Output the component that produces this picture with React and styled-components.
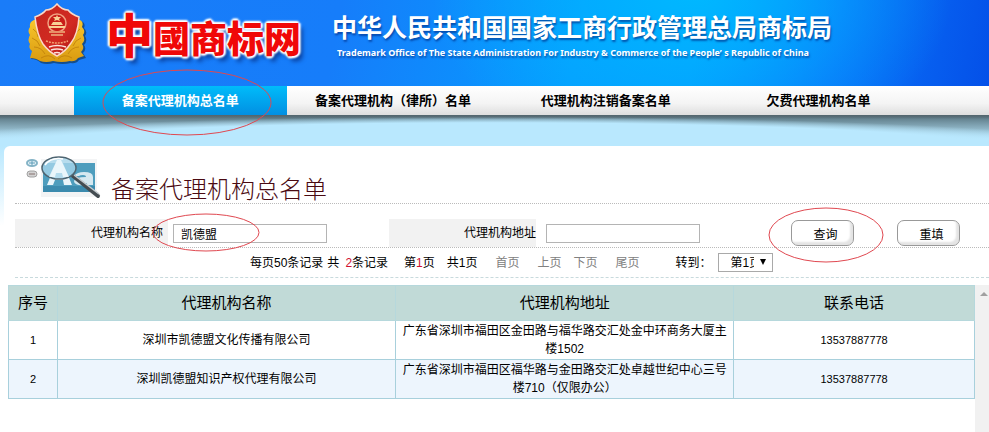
import React, { useState } from 'react';
import styled, { createGlobalStyle } from 'styled-components';

const FONT = `'Liberation Sans', 'Noto Sans CJK SC', sans-serif`;
const LINE = '#a8d0dc';

const GlobalStyle = createGlobalStyle`
  * {
    box-sizing: border-box;
  }

  body {
    margin: 0;
    font-family: ${FONT};
    font-size: 12px;
    line-height: 18px;
    color: #000;
    background: #fff;
  }

  button, input, select {
    font-family: inherit;
    font-size: 12px;
    color: inherit;
  }
`;

const Banner = styled.header`
  display: flex;
  align-items: flex-start;
  height: 86px;
  padding-left: 26px;
  background:
    radial-gradient(ellipse 260px 180px at 70% -10%, #00b8ff, rgba(0, 170, 255, 0) 100%),
    linear-gradient(100deg, #1a7cf8 0%, #167dfa 34%, #069bff 58%, #0598ff 70%, #0a74fa 84%, #0450e8 100%);
`;

const Emblem = styled.svg`
  flex: none;
  width: 62px;
  height: 62px;
  margin-top: 2px;
`;

const SiteName = styled.div`
  flex: none;
  margin: 7px 0 0 18px;
  font-size: 37px;
  line-height: 60px;
  font-weight: 900;
  color: #f00808;
  text-shadow: 2px 0 2px #fff, -2px 0 2px #fff, 0 2px 2px #fff, 0 -2px 2px #fff,
    1px 1px 2px #fff, -1px -1px 2px #fff, 4px 5px 4px #0a3f9c;
`;

const LeadChar = styled.span`
  font-size: 47px;
`;

const BannerTitles = styled.div`
  flex: none;
  margin: 12px 0 0 31px;
  color: #fff;
  white-space: nowrap;
  text-shadow: 1px 2px 2px rgba(0, 50, 140, 0.7);
`;

const OfficeName = styled.h1`
  margin: 0;
  font-size: 25px;
  line-height: 32px;
  font-weight: 700;
`;

const OfficeNameEn = styled.p`
  margin: 0;
  padding-left: 5px;
  font-family: 'Noto Sans', sans-serif;
  font-size: 9px;
  font-weight: 700;
`;

const Nav = styled.nav`
  display: grid;
  grid-template-columns: repeat(4, 1fr);
  height: 29px;
  padding: 0 64px 0 74px;
  background: linear-gradient(#fff, #f4f4f4 60%, #dedede);
`;

const NavItem = styled.a`
  position: relative;
  display: flex;
  align-items: center;
  justify-content: center;
  font-size: 13px;
  font-weight: 700;
  text-decoration: none;
  color: ${props => (props.$active ? '#fff' : '#000')};
  background: ${props => (props.$active ? 'linear-gradient(#00bcfa, #028fe2)' : 'none')};
`;

const Mark = styled.svg`
  position: absolute;
  left: ${props => props.$left}px;
  top: ${props => props.$top}px;
  z-index: 2;
  width: ${props => props.$width}px;
  height: ${props => props.$height}px;
  overflow: visible;
  pointer-events: none;
`;

const Shade = styled.div`
  height: 31px;
  background:
    linear-gradient(#53656d, rgba(83, 101, 109, 0) 4px),
    radial-gradient(ellipse 62% 100% at 50% 105%, #b9e8fe 80%, rgba(185, 232, 254, 0) 100%),
    linear-gradient(#55707b, #b9e8fe 24px);
`;

const Page = styled.div`
  padding-left: 4px;
  background: linear-gradient(#b9e8fe, #fff 80px);
`;

const Panel = styled.main`
  border-radius: 6px 0 0 0;
  background: #fff;
`;

const Heading = styled.div`
  display: flex;
  align-items: flex-end;
  height: 58px;
  margin-left: 11px;
  padding-left: 10px;
  border-bottom: 1px dotted #bbb;
`;

const SearchIcon = styled.svg`
  flex: none;
  width: 78px;
  height: 48px;
`;

const PageTitle = styled.h2`
  margin: 0 0 0 8px;
  font-size: 24px;
  line-height: 26px;
  font-weight: 300;
  color: #4a0a12;
`;

const SearchForm = styled.form`
  display: grid;
  grid-template-columns: 153fr 221fr 147fr 453fr;
  height: 44px;
  margin-left: 11px;
  padding-top: 15px;
  border-bottom: 1px dotted #bbb;
`;

const FieldLabel = styled.label`
  display: flex;
  align-items: center;
  justify-content: flex-end;
  padding-right: ${props => props.$gap}px;
  background: #f2f2f2;
`;

const FieldCell = styled.div`
  position: relative;
  display: flex;
  align-items: center;
  padding-left: ${props => props.$gap}px;
`;

const TextBox = styled.input`
  width: 154px;
  height: 19px;
  padding: 0 7px;
  border: 1px solid #b4b4b4;
  outline: none;
  background: #fff;
`;

const FormButton = styled.button`
  width: 63px;
  height: 26px;
  margin-left: ${props => props.$gap}px;
  padding: 0 0 0 6px;
  border: 1px solid #999;
  border-radius: 7px;
  background: #fff;
  box-shadow: inset -3px -3px 2px #e4e4e4;
  cursor: pointer;
`;

const Pager = styled.div`
  display: flex;
  align-items: center;
  height: 30px;
  margin-left: 11px;
  padding-left: 235px;
  border-bottom: 1px dashed #c8dadd;
`;

const PagerText = styled.span`
  margin-right: ${props => props.$gap}px;
`;

const PagerLink = styled.a`
  margin-right: ${props => props.$gap}px;
  color: #808080;
  text-decoration: none;
`;

const JumpLabel = styled.label`
  margin-right: 6px;
`;

const Red = styled.span`
  color: #d01030;
`;

const SelectWrap = styled.span`
  position: relative;
  display: flex;

  &::after {
    content: '';
    position: absolute;
    right: 7px;
    top: 6px;
    border: 3px solid transparent;
    border-top: 6px solid #000;
    border-bottom: 0;
    pointer-events: none;
  }
`;

const PageSelect = styled.select`
  appearance: none;
  width: 55px;
  height: 19px;
  padding: 0 18px 0 12px;
  border: 1px solid #a9a9a9;
  border-radius: 0;
  background: #fff;
  text-overflow: clip;
`;

const Results = styled.div`
  display: flex;
  min-height: 147px;
  margin: 7px 0 0 4px;
`;

const ResultTable = styled.table`
  flex: 1;
  align-self: flex-start;
  table-layout: fixed;
  border-collapse: collapse;
  text-align: center;
`;

const HeadCell = styled.th`
  width: ${props => props.$width};
  height: 35px;
  padding: 0;
  border: 1px solid #b6d8dc;
  font-size: 15px;
  font-weight: 400;
  background: #c1dad7;
`;

const Row = styled.tr`
  background: ${props => (props.$shaded ? '#edf5fd' : '#fff')};
`;

const Cell = styled.td`
  height: 39px;
  padding: 1px 6px;
  border: 1px solid ${LINE};
  font-size: ${props => (props.$numeric ? 11 : 12)}px;
`;

const Scrollbar = styled.div`
  flex: none;
  width: 14px;
  background: #f1f1f1;

  &::before {
    content: '';
    display: block;
    width: 0;
    margin: 7px 0 0 5px;
    border: 4px solid transparent;
    border-top: 0;
    border-bottom: 4px solid #a0a0a0;
  }
`;

const NAV_ITEMS = [
  '备案代理机构总名单',
  '备案代理机构（律所）名单',
  '代理机构注销备案名单',
  '欠费代理机构名单',
];

const COLUMNS = [
  { title: '序号', width: '49px' },
  { title: '代理机构名称', width: '35%' },
  { title: '代理机构地址', width: '35%' },
  { title: '联系电话', width: 'auto' },
];

const AGENCIES = [
  {
    name: '深圳市凯德盟文化传播有限公司',
    address: '广东省深圳市福田区金田路与福华路交汇处金中环商务大厦主楼1502',
    phone: '13537887778',
  },
  {
    name: '深圳凯德盟知识产权代理有限公司',
    address: '广东省深圳市福田区福华路与金田路交汇处卓越世纪中心三号楼710（仅限办公）',
    phone: '13537887778',
  },
];

function Circle({ left, top, width, height }) {
  return (
    <Mark $left={left} $top={top} $width={width} $height={height} viewBox={`0 0 ${width} ${height}`}>
      <ellipse
        cx={width / 2}
        cy={height / 2}
        rx={width / 2}
        ry={height / 2}
        fill="none"
        stroke="#e04850"
      />
    </Mark>
  );
}

function EmblemIcon() {
  return (
    <Emblem viewBox="0 0 62 62">
      <defs>
        <linearGradient id="gold" x1="0" y1="0" x2="0" y2="1">
          <stop offset="0" stopColor="#f8c62c" />
          <stop offset="1" stopColor="#d99a10" />
        </linearGradient>
        <linearGradient id="shield" x1="0" y1="0" x2="1" y2="1">
          <stop offset="0" stopColor="#c4261e" />
          <stop offset="0.6" stopColor="#d22a22" />
          <stop offset="1" stopColor="#a81512" />
        </linearGradient>
      </defs>
      <path
        d="M8 18Q3 20 4 25Q1 29 4 33Q1 38 4 42Q2 46 6 49L4 56Q10 56 14 60Q20 62 27 60Q36 62 44 60Q49 61 52 57L59 55L56 50Q60 46 57 42Q61 38 58 33Q61 29 57 25Q59 20 54 18Z"
        fill="#123a60"
        opacity="0.7"
        transform="translate(1 1)"
      />
      <path
        d="M8 18Q3 20 4 25Q1 29 4 33Q1 38 4 42Q2 46 6 49L4 56Q10 56 14 59Q20 61 27 59Q36 61 44 59Q49 60 52 56L58 54L55 50Q59 46 56 42Q60 38 57 33Q60 29 56 25Q58 20 54 18Z"
        fill="url(#gold)"
      />
      <path
        d="M7 27q5 3 5 8M6 36q6 2 8 8M8 45q7 0 11 7M54 27q-5 3-5 8M55 36q-6 2-8 8M53 45q-7 0-11 7M15 56q8-5 14 1M46 56q-8-5-14 1"
        fill="none"
        stroke="#b97908"
        strokeWidth="1"
        opacity="0.7"
      />
      <path
        d="M31 2Q26 8 20 8Q17 12 9 15Q11 33 17 42Q23 50 31 54Q39 50 45 41Q52 32 53 15Q45 12 42 8Q36 8 31 2Z"
        fill="url(#shield)"
        stroke="#fbd9c8"
        strokeWidth="1.5"
      />
      <circle cx="31" cy="21" r="9" fill="#c91d18" stroke="#f0a080" strokeWidth="1.5" />
      <path
        d="M31 13l1 2h3l-2 2 1 2-3-1-3 1 1-2-2-2h3zM25 23l2-3h8l2 3zM23 24h16v2H23z"
        fill="#f8cf95"
      />
      <path d="M23 29h16v2H23zM25 32h12v2H25z" fill="#e79066" />
      <path d="M20 39q11 4 22 0" fill="none" stroke="#f2a070" strokeWidth="1.5" strokeDasharray="2 1" />
      <path d="M23 45q8-3 17 0M25 48q6-2 12 0M28 51q3-1 6 0" fill="none" stroke="#fbe3dc" strokeWidth="1.5" />
    </Emblem>
  );
}

function MagnifierIcon() {
  return (
    <SearchIcon viewBox="0 0 78 48">
      <rect x="16" y="4" width="56" height="38" fill="#f3f4f5" />
      <rect x="18" y="8" width="52" height="29" fill="#4e9dbd" />
      <rect x="18" y="31" width="52" height="6" fill="#3c8bae" />
      <path d="M22 30l9-22h7l9 22h-8l-1-5h-8l-2 5z" fill="#eaf5fa" />
      <path
        d="M49 21q3-4 10-4 9 0 9 5v8h-6v-2q-3 3-8 2-5-1-5-4 1-4 12-4 0-2-3-2-3 0-4 1z"
        fill="#d5e8f0"
      />
      <ellipse cx="7" cy="8" rx="5" ry="3" fill="#e8f4f9" stroke="#84b3c6" strokeWidth="2" />
      <path d="M7 6v4M4 8h6" stroke="#5c9cb7" />
      <rect x="2" y="16" width="10" height="6" rx="3" fill="#d3d3d3" stroke="#a2a2a2" />
      <path d="M4 19h6" stroke="#85716f" />
      <path d="M48 21L73 41" stroke="#454d52" strokeWidth="4" strokeLinecap="round" />
      <path d="M49 20L74 39" stroke="#c5cbcf" strokeWidth="1.5" />
      <ellipse cx="34" cy="13" rx="17" ry="11" fill="#a6d6eb" fillOpacity="0.8" stroke="#4e6470" strokeWidth="1.5" />
      <path d="M24 22l8-17h4l8 17h-6l-1-4h-6l-1 4z" fill="#f7fcfe" opacity="0.8" />
      <path d="M20 10q6-8 18-6" fill="none" stroke="#fff" strokeWidth="1.5" />
    </SearchIcon>
  );
}

function AgencyList() {
  return (
    <Results>
      <ResultTable>
        <thead>
          <tr>
            {COLUMNS.map(column => (
              <HeadCell key={column.title} $width={column.width} scope="col">
                {column.title}
              </HeadCell>
            ))}
          </tr>
        </thead>
        <tbody>
          {AGENCIES.map((agency, i) => (
            <Row key={agency.name} $shaded={i % 2 === 1}>
              <Cell $numeric>{i + 1}</Cell>
              <Cell>{agency.name}</Cell>
              <Cell>{agency.address}</Cell>
              <Cell $numeric>{agency.phone}</Cell>
            </Row>
          ))}
        </tbody>
      </ResultTable>
      <Scrollbar />
    </Results>
  );
}

function App() {
  const [name, setName] = useState('凯德盟');
  const [address, setAddress] = useState('');

  const clearForm = () => {
    setName('');
    setAddress('');
  };

  return (
    <>
      <GlobalStyle />
      <Banner>
        <EmblemIcon />
        <SiteName><LeadChar>中</LeadChar>國商标网</SiteName>
        <BannerTitles>
          <OfficeName>中华人民共和国国家工商行政管理总局商标局</OfficeName>
          <OfficeNameEn>
            Trademark Office of The State Administration For Industry &amp; Commerce of the People’ s Republic of China
          </OfficeNameEn>
        </BannerTitles>
      </Banner>
      <Nav>
        {NAV_ITEMS.map((item, i) => (
          <NavItem key={item} href="#" $active={i === 0}>
            {item}
            {i === 0 && <Circle left={29} top={-16} width={168} height={65} />}
          </NavItem>
        ))}
      </Nav>
      <Shade />
      <Page>
        <Panel>
          <Heading>
            <MagnifierIcon />
            <PageTitle>备案代理机构总名单</PageTitle>
          </Heading>
          <SearchForm onSubmit={e => e.preventDefault()}>
            <FieldLabel htmlFor="agency-name" $gap={5}>代理机构名称</FieldLabel>
            <FieldCell $gap={5}>
              <TextBox id="agency-name" value={name} onChange={e => setName(e.target.value)} />
              <Circle left={-15} top={-5} width={106} height={37} />
            </FieldCell>
            <FieldLabel htmlFor="agency-address" $gap={0}>代理机构地址</FieldLabel>
            <FieldCell $gap={10}>
              <TextBox id="agency-address" value={address} onChange={e => setAddress(e.target.value)} />
              <FormButton type="submit" $gap={91}>查询</FormButton>
              <FormButton type="button" $gap={43} onClick={clearForm}>重填</FormButton>
              <Circle left={233} top={-11} width={114} height={54} />
            </FieldCell>
          </SearchForm>
          <Pager>
            <PagerText $gap={4}>每页50条记录</PagerText>
            <PagerText $gap={6}>共</PagerText>
            <PagerText $gap={16}><Red>2</Red>条记录</PagerText>
            <PagerText $gap={12}>第<Red>1</Red>页</PagerText>
            <PagerText $gap={18}>共1页</PagerText>
            <PagerLink href="#" $gap={18}>首页</PagerLink>
            <PagerLink href="#" $gap={12}>上页</PagerLink>
            <PagerLink href="#" $gap={18}>下页</PagerLink>
            <PagerLink href="#" $gap={36}>尾页</PagerLink>
            <JumpLabel htmlFor="page-number">转到：</JumpLabel>
            <SelectWrap>
              <PageSelect id="page-number">
                <option>第1页</option>
              </PageSelect>
            </SelectWrap>
          </Pager>
          <AgencyList />
        </Panel>
      </Page>
    </>
  );
}

export default App;
